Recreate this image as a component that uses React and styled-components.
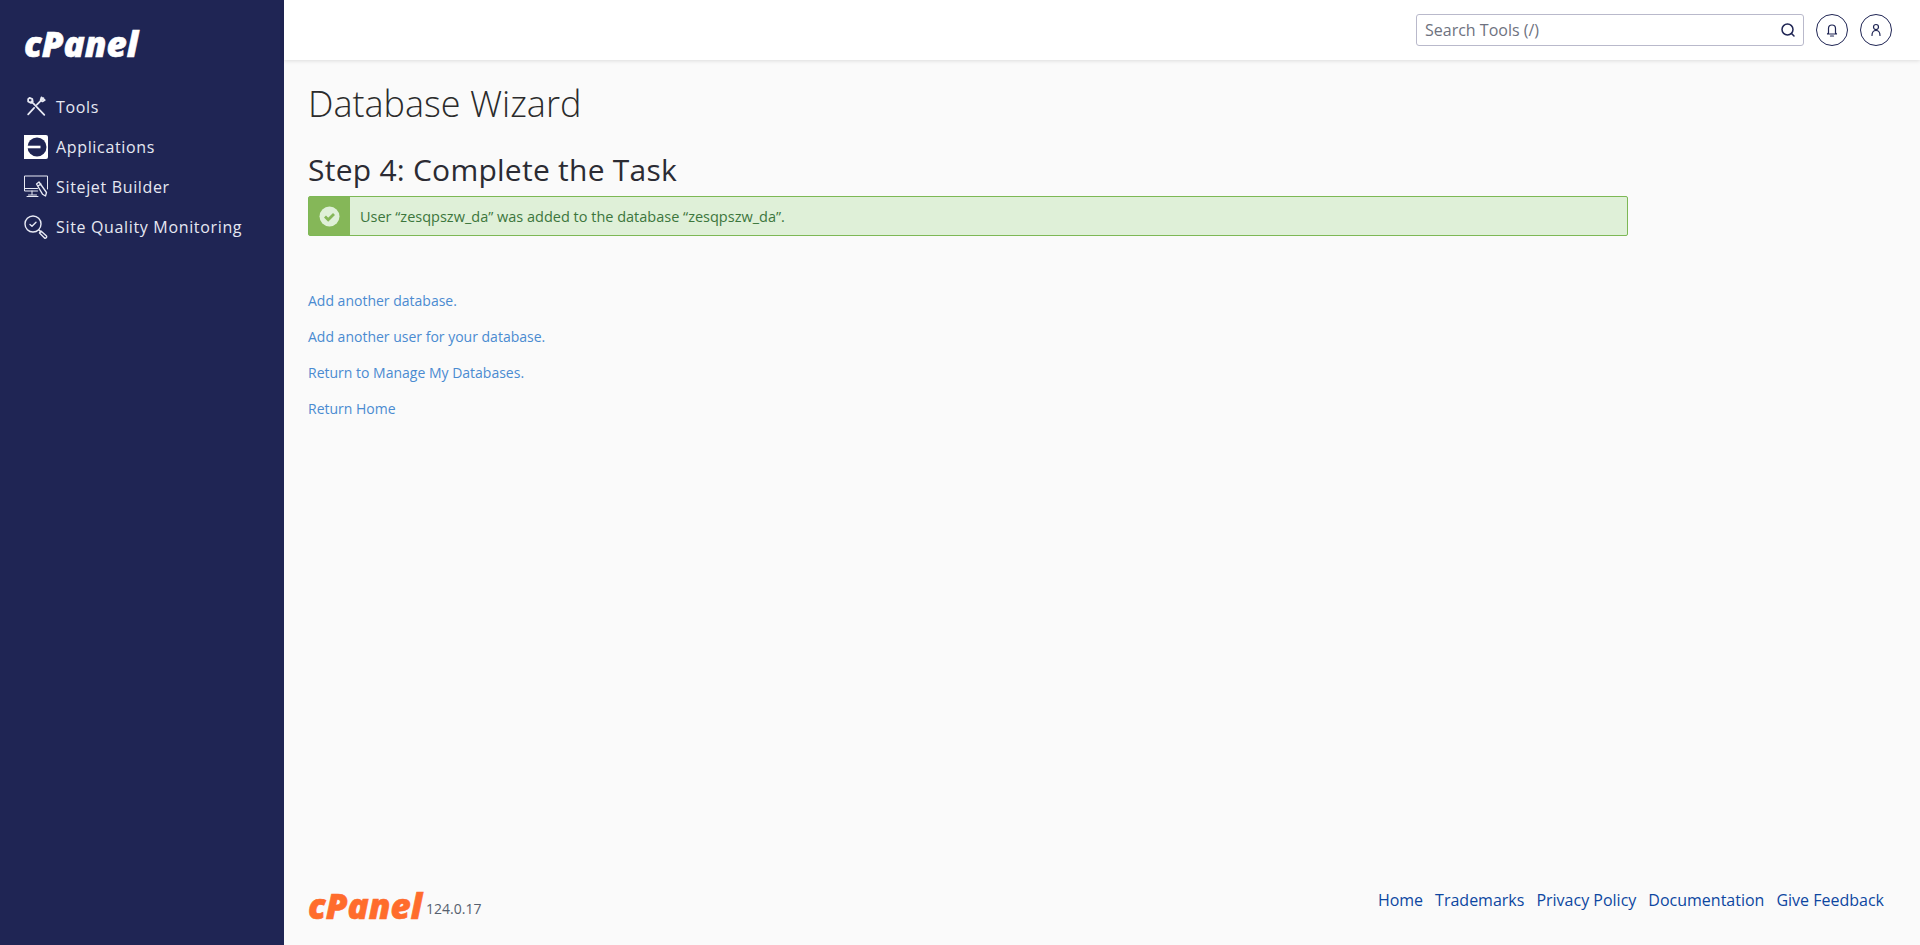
import React from 'react';
import styled, { createGlobalStyle } from 'styled-components';

const GlobalStyle = createGlobalStyle`
  html, body {
    margin: 0;
    padding: 0;
    height: 100%;
    overflow: hidden;
  }
  body {
    font-family: "Open Sans", "Noto Sans", sans-serif;
    background: #fafafa;
  }
`;

const Page = styled.div`
  display: flex;
  height: 945px;
`;

const Sidebar = styled.aside`
  width: 284px;
  flex-shrink: 0;
  background: #1f2554;
  display: flex;
  flex-direction: column;
  padding: 23px 24px 0;
  box-sizing: border-box;
`;

const LogoMark = styled.div`
  font-family: "Open Sans", sans-serif;
  font-weight: 800;
  font-style: italic;
  font-size: 35px;
  line-height: 42px;
  color: ${p => p.$color};
  -webkit-text-stroke: 0.6px ${p => p.$color};
`;

const SideNav = styled.nav`
  display: flex;
  flex-direction: column;
  margin-top: 22px;
`;

const SideItem = styled.a`
  display: flex;
  align-items: center;
  gap: 8px;
  height: 40px;
  color: #e6e8f2;
  font-size: 16px;
  font-weight: 500;
  letter-spacing: 0.66px;
  white-space: nowrap;
`;

const SideIcon = styled.svg`
  width: 24px;
  height: 24px;
  flex-shrink: 0;
`;

const Main = styled.div`
  flex: 1;
  min-width: 0;
  display: flex;
  flex-direction: column;
`;

const TopBar = styled.header`
  height: 60px;
  flex-shrink: 0;
  box-sizing: border-box;
  background: #fff;
  box-shadow: 0 1px 4px rgba(0, 0, 0, 0.12);
  display: flex;
  align-items: center;
  justify-content: flex-end;
  gap: 12px;
  padding-right: 28px;
`;

const SearchBox = styled.div`
  width: 388px;
  height: 32px;
  box-sizing: border-box;
  border: 1px solid #b9b9cb;
  border-radius: 3px;
  display: flex;
  align-items: center;
  justify-content: space-between;
  padding: 0 7px 0 8px;
  color: #6e7280;
  font-size: 16px;
`;

const RoundButton = styled.button`
  width: 32px;
  height: 32px;
  padding: 0;
  border: 1px solid #1f2554;
  border-radius: 50%;
  background: #fff;
  display: flex;
  align-items: center;
  justify-content: center;
`;

const Content = styled.main`
  flex: 1;
  padding: 0 24px;
`;

const PageTitle = styled.h1`
  margin: 22px 0 0;
  font-size: 36px;
  line-height: 44px;
  font-weight: 300;
  color: #2b2b2b;
`;

const StepTitle = styled.h2`
  margin: 26px 0 0;
  font-size: 30px;
  line-height: 36px;
  font-weight: 500;
  letter-spacing: 0.25px;
  color: #2b2b33;
`;

const Alert = styled.div`
  width: 1320px;
  height: 40px;
  margin-top: 8px;
  box-sizing: border-box;
  display: flex;
  align-items: stretch;
  background: #dff0d8;
  border: 1px solid #7db855;
  border-radius: 2px;
  color: #3c763d;
  font-size: 14.5px;
`;

const AlertBadge = styled.div`
  width: 41px;
  flex-shrink: 0;
  background: #85b758;
  display: flex;
  align-items: center;
  justify-content: center;
`;

const AlertText = styled.div`
  display: flex;
  align-items: center;
  padding-left: 10px;
`;

const LinkList = styled.div`
  display: flex;
  flex-direction: column;
  gap: 16px;
  margin-top: 55px;
`;

const TaskLink = styled.a`
  color: #4a8bd1;
  font-size: 14px;
  line-height: 20px;
`;

const Footer = styled.footer`
  display: flex;
  align-items: flex-start;
  justify-content: space-between;
  height: 60px;
  padding: 0 36px 0 24px;
`;

const Brand = styled.div`
  display: flex;
  align-items: flex-start;
  gap: 4px;
`;

const Version = styled.span`
  font-size: 14px;
  line-height: 20px;
  margin-top: 14px;
  color: #56606e;
`;

const FooterLinks = styled.div`
  display: flex;
  gap: 12px;
  padding-top: 3px;
`;

const FooterLink = styled.a`
  color: #0d47a1;
  font-size: 16px;
  line-height: 24px;
`;

const stroke = { fill: 'none', stroke: '#e8eaf4', strokeWidth: 1.4, strokeLinecap: 'round', strokeLinejoin: 'round' };

const footerLinks = ['Home', 'Trademarks', 'Privacy Policy', 'Documentation', 'Give Feedback'];
const taskLinks = ['Add another database.', 'Add another user for your database.', 'Return to Manage My Databases.', 'Return Home'];

export default function App() {
  return (
    <Page>
      <GlobalStyle />
      <Sidebar>
        <LogoMark $color="#ffffff">cPanel</LogoMark>
        <SideNav>
          <SideItem>
            <SideIcon viewBox="-1 0 26 26">
              <path {...stroke} strokeWidth="1.9" d="M7 7l14 14.500M3.500 4.500L5 3l3 1.500.5 3-2 1-3-1.500zM20 3.500l-7 7M10 14l-6.500 7M18 2.500l3.500 3-2.500 1.500-2-1.500z" />
            </SideIcon>
            Tools
          </SideItem>
          <SideItem>
            <SideIcon viewBox="0 0 24 24">
              <rect width="24" height="24" rx="2" fill="#fff" />
              <circle cx="13" cy="12" r="9.500" fill="#1f2554" />
              <path d="M3 10.700h13.500v2.600H3z" fill="#fff" />
              <path d="M0 0h5v4A9.500 9.500 0 0 0 5 20v4H0z" fill="#fff" />
            </SideIcon>
            Applications
          </SideItem>
          <SideItem>
            <SideIcon viewBox="0 0 24 24">
              <path {...stroke} strokeWidth="1" d="M13.500 16H.5V1h23v13M.5 13.500h13M8 16v3.500M4.500 20h8M3 21.500h11" />
              <path {...stroke} strokeWidth="1.300" d="M15 7l7.500 10.500-1 3.500-3-1.800L12.500 9zM14 11l3-2" />
            </SideIcon>
            Sitejet Builder
          </SideItem>
          <SideItem>
            <SideIcon viewBox="0 0 24 24">
              <circle {...stroke} cx="9" cy="9" r="8" />
              <path {...stroke} d="M6 9.500l2 1.800 4-4" />
              <path {...stroke} d="M15 15l2 2M17 16l5.500 5a1.500 1.500 0 0 1-2 2L15.500 18z" />
            </SideIcon>
            Site Quality Monitoring
          </SideItem>
        </SideNav>
      </Sidebar>
      <Main>
        <TopBar>
          <SearchBox>
            Search Tools (/)
            <svg width="16" height="16" viewBox="0 0 16 16" fill="none" stroke="#1f2554" strokeWidth="1.500" strokeLinecap="round">
              <circle cx="7.500" cy="7.500" r="5.500" />
              <path d="M11.500 11.500l2.500 2.500" />
            </svg>
          </SearchBox>
          <RoundButton>
            <svg width="14" height="14" viewBox="0 0 14 14" fill="none" stroke="#1f2554" strokeWidth="1.200" strokeLinecap="round" strokeLinejoin="round">
              <path d="M3.500 10V5.500a3.500 3.500 0 0 1 7 0V10l1 1h-9zM5.500 13h3" />
            </svg>
          </RoundButton>
          <RoundButton>
            <svg width="14" height="14" viewBox="0 0 14 14" fill="none" stroke="#1f2554" strokeWidth="1.200" strokeLinecap="round" strokeLinejoin="round">
              <circle cx="7" cy="4" r="2.500" />
              <path d="M3 12.500c0-3 1.500-5 4-5s4 2 4 5" />
            </svg>
          </RoundButton>
        </TopBar>
        <Content>
          <PageTitle>Database Wizard</PageTitle>
          <StepTitle>Step 4: Complete the Task</StepTitle>
          <Alert>
            <AlertBadge>
              <svg width="21" height="21" viewBox="0 0 21 21">
                <circle cx="10.500" cy="10.500" r="10" fill="#dff0d8" />
                <path d="M6 10.500l3.200 3.200 5.800-5.700" fill="none" stroke="#85b758" strokeWidth="2.800" />
              </svg>
            </AlertBadge>
            <AlertText>User “zesqpszw_da” was added to the database “zesqpszw_da”.</AlertText>
          </Alert>
          <LinkList>
            {taskLinks.map(t => <TaskLink key={t}>{t}</TaskLink>)}
          </LinkList>
        </Content>
        <Footer>
          <Brand>
            <LogoMark $color="#ff6c2c">cPanel</LogoMark>
            <Version>124.0.17</Version>
          </Brand>
          <FooterLinks>
            {footerLinks.map(t => <FooterLink key={t}>{t}</FooterLink>)}
          </FooterLinks>
        </Footer>
      </Main>
    </Page>
  );
}
